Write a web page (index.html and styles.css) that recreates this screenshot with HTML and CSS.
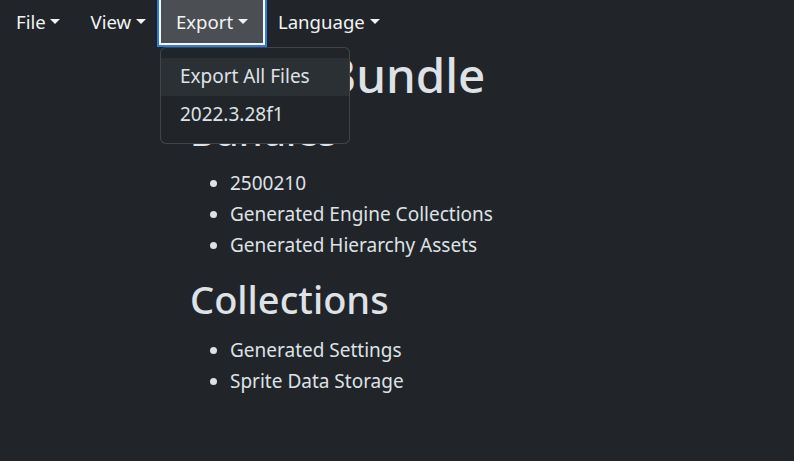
FILE: index.html
```html
<!DOCTYPE html>
<html lang="en">
<head>
    <meta charset="UTF-8">
    <meta name="viewport" content="width=device-width, initial-scale=1.0">
    <title>Asset Bundle</title>
    <link rel="stylesheet" href="styles.css">
</head>
<body>
    <nav class="menubar">
        <div class="menu-item">
            <a class="menu-link dropdown-toggle" href="#">File</a>
        </div>
        <div class="menu-item">
            <a class="menu-link dropdown-toggle" href="#">View</a>
        </div>
        <div class="menu-item open">
            <a class="menu-link dropdown-toggle active" href="#">Export</a>
            <div class="dropdown-menu">
                <a class="dropdown-item hover" href="#">Export All Files</a>
                <a class="dropdown-item" href="#">2022.3.28f1</a>
            </div>
        </div>
        <div class="menu-item">
            <a class="menu-link dropdown-toggle" href="#">Language</a>
        </div>
    </nav>

    <main class="content">
        <h1>Asset Bundle</h1>
        <section class="group">
            <h2>Bundles</h2>
            <ul>
                <li>2500210</li>
                <li>Generated Engine Collections</li>
                <li>Generated Hierarchy Assets</li>
            </ul>
        </section>
        <section class="group">
            <h2>Collections</h2>
            <ul>
                <li>Generated Settings</li>
                <li>Sprite Data Storage</li>
            </ul>
        </section>
    </main>
</body>
</html>
```

FILE: styles.css
```css
* {
    box-sizing: border-box;
}
body {
    margin: 0;
    background-color: #212529;
    color: #dee2e6;
    font-family: "Noto Sans", "Open Sans", sans-serif;
    font-size: 19px;
    line-height: 1.5;
}
a {
    color: inherit;
    text-decoration: none;
}
.menubar {
    display: flex;
    height: 46px;
    padding-left: 1px;
}
.menu-item {
    position: relative;
}
.menu-link {
    display: block;
    height: 43px;
    padding: 8px 15px 7px;
    font-size: 18.6px;
    color: #f1f3f5;
}
.menu-link.active {
    background-color: #4b4e52;
    box-shadow: 0 0 0 2px #f8f9fa, 0 0 0 4px #2b7de0;
}
.dropdown-toggle::after {
    content: "";
    display: inline-block;
    margin-left: 0.255em;
    vertical-align: 0.255em;
    border-top: 0.3em solid;
    border-right: 0.3em solid transparent;
    border-left: 0.3em solid transparent;
}
.dropdown-menu {
    position: absolute;
    top: 47px;
    left: -1px;
    min-width: 190px;
    padding: 9.5px 0;
    background-color: #212529;
    border: 1px solid rgba(255, 255, 255, 0.15);
    border-radius: 6px;
    z-index: 10;
}
.dropdown-item {
    display: block;
    padding: 4.75px 19px;
    color: #dee2e6;
    white-space: nowrap;
}
.dropdown-item.hover {
    background-color: #2b3035;
}
.content {
    padding-left: 190px;
}
h1, h2 {
    margin: 0;
    font-weight: 500;
    line-height: 1.2;
}
h1 {
    margin-bottom: 6px;
    font-size: 47.5px;
}
h2 {
    margin-bottom: 13px;
    font-size: 38px;
}
ul {
    margin: 0 0 16px;
    padding-left: 40px;
}
li {
    line-height: 31px;
}
```
